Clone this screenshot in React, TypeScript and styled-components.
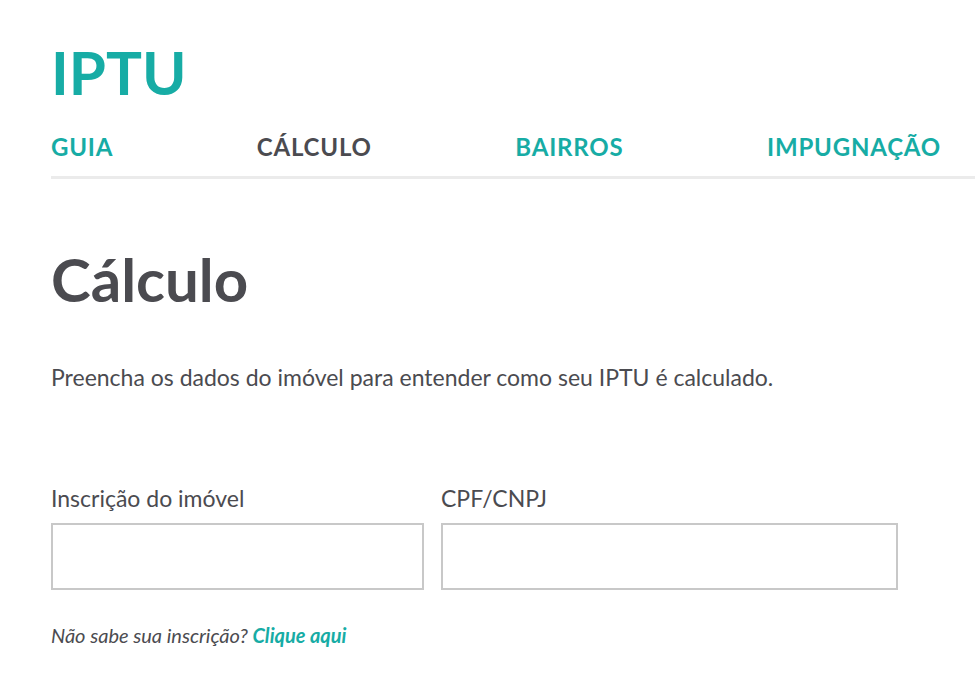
import { createGlobalStyle } from "styled-components";
import styled from "styled-components";

const TEAL = "#17aca5";
const DARK = "#4b4b50";

const GlobalStyle = createGlobalStyle`
  html, body {
    margin: 0;
    padding: 0;
    background: #ffffff;
  }
  body {
    font-family: Lato, "Open Sans", "Liberation Sans", sans-serif;
    color: ${DARK};
  }
`;

const Page = styled.div`
  padding-left: 51px;
  overflow: hidden;
`;

const Header = styled.header`
  padding-top: 42px;
  border-bottom: 3px solid #ebebeb;
  padding-bottom: 17px;
`;

const Logo = styled.h1`
  margin: 0;
  font-size: 60px;
  line-height: 1;
  font-weight: 700;
  color: ${TEAL};
`;

const Nav = styled.nav`
  margin-top: 33px;
  width: 890px;
  display: flex;
  justify-content: space-between;
`;

const NavLink = styled.a<{ $active?: boolean }>`
  font-size: 24px;
  line-height: 1;
  font-weight: 700;
  letter-spacing: 0.8px;
  text-transform: uppercase;
  text-decoration: none;
  color: ${(p) => (p.$active ? DARK : TEAL)};
`;

const Main = styled.main`
  padding-top: 70px;
`;

const Title = styled.h2`
  margin: 0;
  font-size: 60px;
  line-height: 1;
  font-weight: 700;
  color: ${DARK};
`;

const Intro = styled.p`
  margin: 51px 0 0;
  font-size: 23px;
  line-height: 34px;
  color: ${DARK};
`;

const FieldRow = styled.div`
  margin-top: 87px;
  display: flex;
  gap: 17px;
`;

const Field = styled.label<{ $width: number }>`
  display: flex;
  flex-direction: column;
  gap: 8px;
  width: ${(p) => p.$width}px;
`;

const FieldLabel = styled.span`
  font-size: 23px;
  line-height: 34px;
  color: ${DARK};
`;

const Input = styled.input`
  box-sizing: border-box;
  height: 67px;
  width: 100%;
  border: 2px solid #c8c8c8;
  border-radius: 0;
  padding: 0 14px;
  font: inherit;
  font-size: 20px;
  outline: none;
`;

const Hint = styled.p`
  margin: 30px 0 0;
  font-size: 20px;
  line-height: 30px;
  font-style: italic;
  color: ${DARK};
`;

const HintLink = styled.a`
  font-weight: 700;
  color: ${TEAL};
  text-decoration: none;
`;

const navItems = [
  { label: "Guia" },
  { label: "Cálculo", active: true },
  { label: "Bairros" },
  { label: "Impugnação" },
];

export default function App() {
  return (
    <Page>
      <GlobalStyle />
      <Header>
        <Logo>IPTU</Logo>
        <Nav>
          {navItems.map((item) => (
            <NavLink key={item.label} href="#" $active={item.active}>
              {item.label}
            </NavLink>
          ))}
        </Nav>
      </Header>
      <Main>
        <Title>Cálculo</Title>
        <Intro>Preencha os dados do imóvel para entender como seu IPTU é calculado.</Intro>
        <FieldRow>
          <Field $width={373}>
            <FieldLabel>Inscrição do imóvel</FieldLabel>
            <Input type="text" />
          </Field>
          <Field $width={457}>
            <FieldLabel>CPF/CNPJ</FieldLabel>
            <Input type="text" />
          </Field>
        </FieldRow>
        <Hint>
          Não sabe sua inscrição? <HintLink href="#">Clique aqui</HintLink>
        </Hint>
      </Main>
    </Page>
  );
}
